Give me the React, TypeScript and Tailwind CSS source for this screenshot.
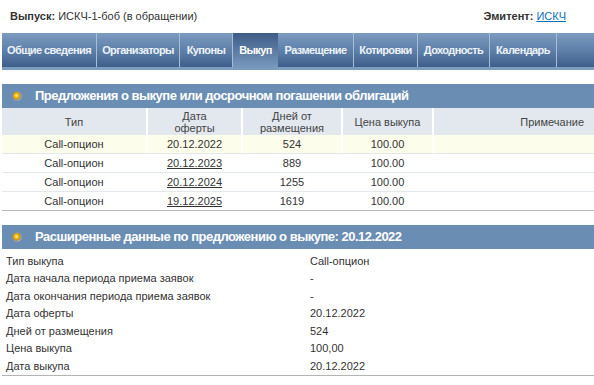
import React from 'react';

const tabs = [
  { label: 'Общие сведения', w: 'w-[95px]' },
  { label: 'Организаторы', w: 'w-[83px]' },
  { label: 'Купоны', w: 'w-[53px]' },
  { label: 'Выкуп', w: 'w-[45px]', active: true },
  { label: 'Размещение', w: 'w-[76px]' },
  { label: 'Котировки', w: 'w-[64px]' },
  { label: 'Доходность', w: 'w-[72px]' },
  { label: 'Календарь', w: 'w-[67px]' },
];

const offers = [
  { type: 'Call-опцион', date: '20.12.2022', days: '524', price: '100.00', link: false },
  { type: 'Call-опцион', date: '20.12.2023', days: '889', price: '100.00', link: true },
  { type: 'Call-опцион', date: '20.12.2024', days: '1255', price: '100.00', link: true },
  { type: 'Call-опцион', date: '19.12.2025', days: '1619', price: '100.00', link: true },
];

const details = [
  ['Тип выкупа', 'Call-опцион'],
  ['Дата начала периода приема заявок', '-'],
  ['Дата окончания периода приема заявок', '-'],
  ['Дата оферты', '20.12.2022'],
  ['Дней от размещения', '524'],
  ['Цена выкупа', '100,00'],
  ['Дата выкупа', '20.12.2022'],
];

const Bullet = () => (
  <svg width="10" height="10" viewBox="0 0 10 10" className="shrink-0">
    <defs>
      <radialGradient id="bg" cx="45%" cy="45%" r="55%">
        <stop offset="0%" stopColor="#fff6a0" />
        <stop offset="45%" stopColor="#f2b705" />
        <stop offset="75%" stopColor="#b98a2a" />
        <stop offset="100%" stopColor="#a9bcd2" />
      </radialGradient>
    </defs>
    <circle cx="5" cy="5" r="4.5" fill="url(#bg)" />
  </svg>
);

const SectionHeader: React.FC<{ title: string }> = ({ title }) => (
  <div className="h-[24px] bg-[#6a8db4] flex items-center pl-[10px] gap-[13px]">
    <Bullet />
    <span className="text-[13px] font-bold text-white tracking-[-0.5px]">{title}</span>
  </div>
);

const App: React.FC = () => {
  return (
    <div className="w-[594px] h-[385px] bg-white overflow-hidden text-[#333] text-[11px]" style={{ fontFamily: '"Liberation Sans", Arial, sans-serif' }}>
      <div className="h-[33px] flex items-center justify-between pl-[10px] pr-[28px] text-[11px] text-[#333]">
        <div>
          <span className="font-bold">Выпуск:</span> ИСКЧ-1-боб (в обращении)
        </div>
        <div>
          <span className="font-bold">Эмитент:</span>{' '}
          <a className="text-[#0e6fb8] underline">ИСКЧ</a>
        </div>
      </div>

      <div className="ml-[2px]">
        <div className="flex h-[37px] bg-[linear-gradient(to_bottom,#7b9bbf_0px,#5d7fa8_18px,#3e5f8a_34px,#7c9cc0_34px,#7c9cc0_37px)]">
          {tabs.map(t => (
            <div
              key={t.label}
              className={
                t.active
                  ? `${t.w} h-[37px] flex items-center justify-center pb-[3px] text-[11px] font-bold tracking-[-0.6px] text-white bg-[linear-gradient(to_bottom,#3d5d88,#7c9cc0)]`
                  : `${t.w} h-[34px] flex items-center justify-center text-[11px] font-bold tracking-[-0.6px] text-[#eef3f8] border-r border-[#a6bed6] whitespace-nowrap`
              }
            >
              {t.label}
            </div>
          ))}
        </div>

        <div className="mt-[14px]">
          <SectionHeader title="Предложения о выкупе или досрочном погашении облигаций" />
          <div className="grid grid-cols-[144px_95px_100px_91px_1fr] h-[27px] bg-[#e2e8ee] text-[11px] text-[#444] leading-[12px]">
            <div className="flex items-center justify-center">Тип</div>
            <div className="flex items-center justify-center text-center border-l-2 border-white">Дата<br />оферты</div>
            <div className="flex items-center justify-center text-center border-l-2 border-white">Дней от<br />размещения</div>
            <div className="flex items-center justify-center border-l-2 border-white">Цена выкупа</div>
            <div className="flex items-center justify-end pr-[10px] border-l-2 border-white">Примечание</div>
          </div>
          {offers.map((o, i) => (
            <div
              key={o.date}
              className={`grid grid-cols-[144px_95px_100px_91px_1fr] h-[19px] text-[11px] border-b ${
                i === offers.length - 1 ? 'border-[#b4b4b4]' : 'border-[#e4e8ec]'
              } ${i === 0 ? 'bg-[#fdfdeb]' : 'bg-white'}`}
            >
              <div className="flex items-center justify-center">{o.type}</div>
              <div className="flex items-center justify-center border-l-2 border-white">
                <span className={o.link ? 'underline' : ''}>{o.date}</span>
              </div>
              <div className="flex items-center justify-center border-l-2 border-white">{o.days}</div>
              <div className="flex items-center justify-center border-l-2 border-white">{o.price}</div>
              <div className="border-l-2 border-white" />
            </div>
          ))}
        </div>

        <div className="mt-[14px]">
          <SectionHeader title="Расширенные данные по предложению о выкупе: 20.12.2022" />
          <div className="pt-[3px] border-b border-[#b4b4b4]">
            {details.map(([k, v]) => (
              <div key={k} className="grid grid-cols-[304px_1fr] h-[17.5px] items-center pl-[4px] text-[11px]">
                <div>{k}</div>
                <div>{v}</div>
              </div>
            ))}
          </div>
        </div>
      </div>
    </div>
  );
};

export default App;
